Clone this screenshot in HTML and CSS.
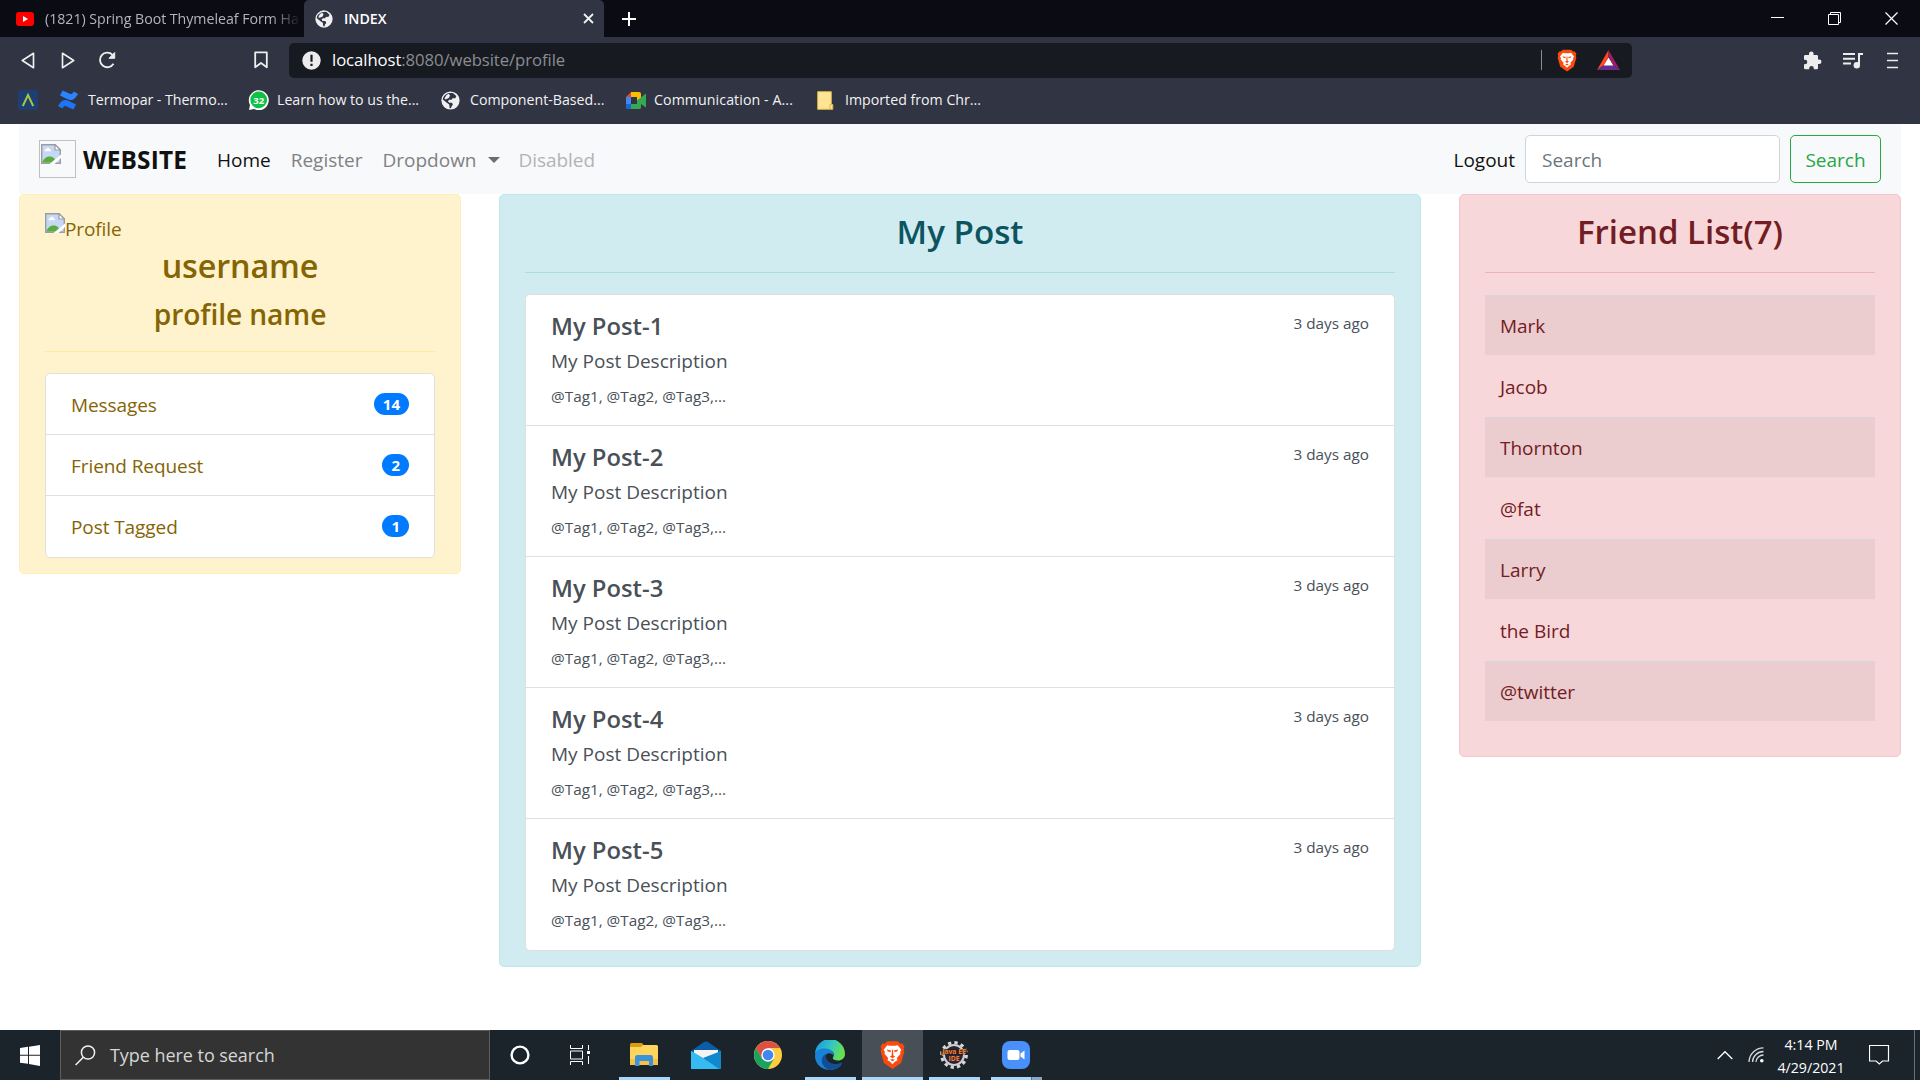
FILE: index.html
```html
<!DOCTYPE html>
<html lang="en">
<head>
<meta charset="utf-8">
<title>INDEX</title>
<link rel="stylesheet" href="styles.css">
</head>
<body>
<svg class="defs" width="0" height="0" aria-hidden="true">
  <symbol id="globe" viewBox="0 0 20 20">
    <circle cx="10" cy="10" r="9.6" fill="#f0f0f2"/>
    <path d="M9 2.2 12.5 2l3.6 3.200-1 2.300-3 .2-1 1.600H8.500l-1.200 1.500 1.200 1.400h3l1 2.300-1.600 2-.4 2L9 17.500l-.3-3.200-2.600-1.900L1.900 9C2.200 5.500 5 3 9 2.200z" fill="#313442"/>
    <path d="M5.500 4.500 8 3l1.500 1.600-1 2.600-3 1.500-2-.4zM8 10.500l3-.3 1 2H9z" fill="#f0f0f2"/>
  </symbol>
  <symbol id="brave" viewBox="0 0 24 28">
    <path d="M7 .8h10l2.500 2.300 2-.2L23.500 6l-.8 2 .7 2.500-3.200 11.200L12 27.500 3.800 21.700.6 10.500 1.300 8 .5 6l2-3.100 2 .2z" fill="#fb4a0e"/>
    <path d="M7 4.600 9.500 5.200h5L17 4.600 20.500 9l-1.200 2.200.4 1.600-3.500 4 .6 2.200-2.300 1.300L12 22.800l-2.500-2.500L7.200 19l.6-2.200-3.500-4 .4-1.600L3.500 9z" fill="#fff"/>
    <path d="M6.500 8.800 10.600 9.600 10 11.300 7.300 10.300zM17.500 8.800 13.400 9.600l.6 1.700 2.700-1zM11.500 9h1l.3 5.500 1.700.9L12 17l-2.500-1.600 1.700-.9zM9.700 18.600 12 17.900l2.300.7L12 20z" fill="#fb4a0e"/>
  </symbol>
  <symbol id="broken" viewBox="0 0 20 20">
    <path d="M.7.7H14L19.300 6V19.300H.7z" fill="#c6d8f5" stroke="#9a9da1" stroke-width="1.400"/>
    <path d="M14 .7V6h5.300z" fill="#fff" stroke="#9a9da1" stroke-width="1.200"/>
    <path d="M3.500 6.800c0-1.500 1.500-1.600 1.700-1.500.3-2 3-1.900 3.300 0 1.500 0 1.800 1.500 1.300 2H4z" fill="#fff"/>
    <path d="M1.400 18.600c1.300-4 4-6.500 8-6 3.500.4 5 3 5.800 6z" fill="#58ad3c"/>
    <path d="M8.500 20 20 10.500V14L13.500 20z" fill="#fff"/>
  </symbol>
</svg>

<header class="browser">
  <div class="tabstrip">
    <div class="tab">
      <svg class="yt" width="18" height="14" viewBox="0 0 18 14"><rect width="18" height="14" rx="3" fill="#f00"/><path d="M7 4v6l5-3z" fill="#fff"/></svg>
      <span class="tab-title faded">(1821) Spring Boot Thymeleaf Form Ha</span>
    </div>
    <div class="tab active">
      <svg width="18" height="18"><use href="#globe"/></svg>
      <span class="tab-title">INDEX</span>
      <svg class="tab-close" width="11" height="11" viewBox="0 0 11 11"><path d="M1 1l9 9M10 1l-9 9" stroke="#f0f0f2" stroke-width="1.800"/></svg>
    </div>
    <svg class="newtab" width="16" height="16" viewBox="0 0 16 16"><path d="M8 1v14M1 8h14" stroke="#fff" stroke-width="2"/></svg>
    <div class="winctl">
      <svg width="14" height="14" viewBox="0 0 14 14"><path d="M0 5.500h13" stroke="#fff"/></svg>
      <svg width="14" height="14" viewBox="0 0 14 14"><path d="M.5 2.500h10v10H.5zM2.500 2.500v-2h10v10h-2" fill="none" stroke="#fff"/></svg>
      <svg width="14" height="14" viewBox="0 0 14 14"><path d="M.5.5l12 12M12.500.5l-12 12" stroke="#fff" stroke-width="1.200"/></svg>
    </div>
  </div>
  <div class="toolbar">
    <svg class="nav-back" width="14" height="17" viewBox="0 0 14 17"><path d="M12.500 1.300v14.400L1.300 8.500z" fill="none" stroke="#eee" stroke-width="1.700" stroke-linejoin="round"/></svg>
    <svg class="nav-fwd" width="14" height="17" viewBox="0 0 14 17"><path d="M1.500 1.300v14.400L12.700 8.500z" fill="none" stroke="#eee" stroke-width="1.700" stroke-linejoin="round"/></svg>
    <svg class="nav-reload" width="19" height="18" viewBox="0 0 19 18"><path d="M15.500 12.800A7.300 7.300 0 1 1 14.500 3.800" fill="none" stroke="#eee" stroke-width="1.900"/><path d="M11 7.300h5.700V1.500z" fill="#eee" stroke="#eee" stroke-width="1" stroke-linejoin="round"/></svg>
    <svg class="nav-mark" width="14" height="18" viewBox="0 0 14 18"><path d="M1.200 1.300h11.600v15L7 12l-5.800 4.300z" fill="none" stroke="#eee" stroke-width="1.800" stroke-linejoin="round"/></svg>
    <div class="urlbar">
      <svg width="19" height="19" viewBox="0 0 19 19"><circle cx="9.500" cy="9.500" r="9.200" fill="#ececee"/><path d="M9.500 3.800v7M9.500 12.800v2.300" stroke="#171a21" stroke-width="2.200"/></svg>
      <span class="url"><b>localhost</b>:8080/website/profile</span>
      <i class="url-sep"></i>
      <svg class="u-brave" width="20" height="23"><use href="#brave"/></svg>
      <svg width="23" height="20" viewBox="0 0 23 20"><path d="M11.500 0v7L7 15l-7 5z" fill="#ff4724"/><path d="M11.500 0 23 20l-7-5-4.500-8z" fill="#9e1f63"/><path d="M0 20l7-5h9l7 5z" fill="#662d91"/><path d="M11.500 7.500 16.300 15.500H6.700z" fill="#fff"/></svg>
    </div>
    <div class="tools">
      <svg width="19" height="19" viewBox="0 0 19 19"><path d="M1 5.200q0-1.200 1.200-1.200H6V2.800a2.300 2.300 0 0 1 4.600 0V4h3.200Q15 4 15 5.200v3.300h1.200a2.300 2.300 0 0 1 0 4.600H15v4q0 1.200-1.200 1.200h-3v-1a2.300 2.300 0 0 0-4.600 0v1h-4Q1 18.300 1 17.100v-3.800h1a2.300 2.300 0 0 0 0-4.600H1z" fill="#ededee"/></svg>
      <svg width="20" height="17" viewBox="0 0 20 17"><path d="M0 2h12M0 6.800h12M0 11.600h8" stroke="#ededee" stroke-width="2"/><path d="M16 13V2h4" fill="none" stroke="#ededee" stroke-width="2"/><circle cx="13.800" cy="13.300" r="3.200" fill="#ededee"/></svg>
      <svg width="12" height="17" viewBox="0 0 12 17"><path d="M0 1.500h11M0 8.500h11M0 15.500h11" stroke="#ededee" stroke-width="1.700"/></svg>
    </div>
  </div>
  <div class="bookmarks">
    <svg width="20" height="20" viewBox="0 0 20 20"><rect width="20" height="20" rx="2" fill="#1f3f72"/><path d="M4.800 16 10 5l5.200 11" fill="none" stroke="#a2c83c" stroke-width="2"/></svg>
    <a class="bm1"><svg width="20" height="20" viewBox="0 0 20 20"><path d="M1 14.500C4 9.500 7 9 11 11l7 3.400-2.600 5.200-6.700-3.200c-2.200-1-2.800-.5-4.500 2.200L0 16z" fill="#1f74f5"/><path d="M19 5.500C16 10.500 13 11 9 9L2 5.600 4.600.4l6.700 3.200c2.200 1 2.800.5 4.500-2.200L20 4z" fill="#2b84ff"/></svg><span>Termopar - Thermo...</span></a>
    <a class="bm2"><svg width="21" height="20" viewBox="0 0 21 20"><path d="M1 20l1-5A10 10 0 1 1 6 19z" fill="#fff"/><circle cx="10.700" cy="9.900" r="8.400" fill="#0dc143"/><text x="10.700" y="13.800" text-anchor="middle" class="wa">32</text></svg><span>Learn how to us the...</span></a>
    <a class="bm3"><svg width="19" height="19"><use href="#globe"/></svg><span>Component-Based...</span></a>
    <a class="bm4"><svg width="20" height="17" viewBox="0 0 20 17"><path d="M0 5 5 0v5z" fill="#ea4335"/><path d="M5 0h8q2 0 2 2v4l-4 3V5H5z" fill="#fbbc04"/><path d="M0 5h5v7H0z" fill="#4285f4"/><path d="M0 12h5v5H1.500Q0 17 0 15.500z" fill="#1967d2"/><path d="M5 12h6V8.500L20 1.500v14L15 12v3.500q0 1.500-1.500 1.500H5z" fill="#34a853"/></svg><span>Communication - A...</span></a>
    <a class="bm5"><svg width="17" height="19" viewBox="0 0 17 19"><path d="M.7.7h13.600v12l1.500 1v4.600H.7z" fill="#ffe494" stroke="#d9b84e"/><path d="M13 18v-4.500h2.500" fill="none" stroke="#d9b84e"/></svg><span>Imported from Chr...</span></a>
  </div>
</header>

<main class="page">
  <nav class="navbar">
    <span class="logo"><svg width="20" height="20"><use href="#broken"/></svg></span>
    <a class="brand">WEBSITE</a>
    <ul class="links">
      <li class="home">Home</li>
      <li class="register">Register</li>
      <li class="dropdown">Dropdown</li>
      <li class="disabled">Disabled</li>
    </ul>
    <a class="logout">Logout</a>
    <input class="search" placeholder="Search">
    <button class="btn">Search</button>
  </nav>

  <div class="columns">
    <section class="card profile">
      <div class="avatar"><svg width="20" height="20"><use href="#broken"/></svg><span>Profile</span></div>
      <h2>username</h2>
      <h3>profile name</h3>
      <hr>
      <ul class="list">
        <li><span>Messages</span><em>14</em></li>
        <li><span>Friend Request</span><em>2</em></li>
        <li><span>Post Tagged</span><em>1</em></li>
      </ul>
    </section>

    <section class="card posts">
      <h2>My Post</h2>
      <hr>
      <div class="list">
        <article><header><h5>My Post-1</h5><small>3 days ago</small></header><p>My Post Description</p><small class="tags">@Tag1, @Tag2, @Tag3,...</small></article>
        <article><header><h5>My Post-2</h5><small>3 days ago</small></header><p>My Post Description</p><small class="tags">@Tag1, @Tag2, @Tag3,...</small></article>
        <article><header><h5>My Post-3</h5><small>3 days ago</small></header><p>My Post Description</p><small class="tags">@Tag1, @Tag2, @Tag3,...</small></article>
        <article><header><h5>My Post-4</h5><small>3 days ago</small></header><p>My Post Description</p><small class="tags">@Tag1, @Tag2, @Tag3,...</small></article>
        <article><header><h5>My Post-5</h5><small>3 days ago</small></header><p>My Post Description</p><small class="tags">@Tag1, @Tag2, @Tag3,...</small></article>
      </div>
    </section>

    <section class="card friends">
      <h2>Friend List(7)</h2>
      <hr>
      <ul class="rows">
        <li>Mark</li><li>Jacob</li><li>Thornton</li><li>@fat</li><li>Larry</li><li>the Bird</li><li>@twitter</li>
      </ul>
    </section>
  </div>
</main>

<footer class="taskbar">
  <div class="start"><svg width="20" height="21" viewBox="0 0 20 21"><path d="M0 3 8 1.800V9.800H0zM9 1.700 20 0v9.800H9zM0 10.800h8v8L0 17.700zM9 10.800h11V21L9 19z" fill="#fff"/></svg></div>
  <div class="tsearch">
    <svg width="21" height="21" viewBox="0 0 21 21"><circle cx="13" cy="7.500" r="6.600" fill="none" stroke="#f2f2f2" stroke-width="1.500"/><path d="M8.300 12.200.6 20" stroke="#f2f2f2" stroke-width="1.500"/></svg>
    <span>Type here to search</span>
  </div>
  <div class="tb plain"><svg width="20" height="20" viewBox="0 0 20 20"><circle cx="10" cy="10" r="8.400" fill="none" stroke="#fff" stroke-width="2.400"/></svg></div>
  <div class="tb plain"><svg width="20" height="20" viewBox="0 0 20 20"><path d="M.5 0v3.500h12V0M.5 20v-3.500h12V20M.5 6h12v8H.5zM18.500 0v5M18.500 11v8" fill="none" stroke="#fff"/><path d="M17 6h3v3h-3z" fill="#fff"/></svg></div>
  <div class="apps">
    <div class="tb run"><svg width="28" height="24" viewBox="0 0 28 24"><path d="M0 1.500Q0 0 1.500 0H12l1.500 2v4H0z" fill="#e09b0c"/><path d="M0 4h11l2-2h13.500Q28 2 28 3.500V22H0z" fill="#ffd55e"/><path d="M0 16h28v5q0 1-1 1H1q-1 0-1-1z" fill="#f7c244"/><path d="M5 23v-8.500Q5 12 7.500 12h13q2.500 0 2.500 2.500V23h-4v-5H9.500v5z" fill="#3b92d8"/></svg></div>
    <div class="tb"><svg width="30" height="28" viewBox="0 0 30 28"><path d="M0 10 13 .9Q15 0 17 .9L30 10v4H0z" fill="#0a5ea8"/><path d="M3 9h24v9H3z" fill="#f3f3f3"/><path d="M0 10l15 9 15-9v18H0z" fill="#2bb0ec"/><path d="M30 10v18H28L12 17z" fill="#1187cc"/><path d="M0 10v18h28L12 17z" fill="#35bbf2"/></svg></div>
    <div class="tb"><svg width="28" height="28" viewBox="0 0 28 28"><circle cx="14" cy="14" r="14" fill="#ffcd40"/><path d="M1.900 7A14 14 0 0 1 26.100 7H14L8 17.500z" fill="#dd5144"/><path d="M1.900 7A14 14 0 0 0 14 28l6-10.500H8z" fill="#1aa260"/><circle cx="14" cy="14" r="6.700" fill="#fff"/><circle cx="14" cy="14" r="5.300" fill="#4285f4"/></svg></div>
    <div class="tb run"><svg width="30" height="30" viewBox="0 0 30 30">
      <defs><linearGradient id="eg" x1="0" y1="0" x2="1" y2=".3"><stop offset=".1" stop-color="#1b9be0"/><stop offset=".6" stop-color="#35c8c0"/><stop offset="1" stop-color="#66e04e"/></linearGradient></defs>
      <path d="M0 14A15 15 0 0 1 30 14c0 4-3 6.500-7 6.500-4 0-6-1.500-5-3 2-3 .5-7-5-8C7 8.500 2 10 0 14z" fill="url(#eg)"/>
      <path d="M0 16C0 10 5 8 11 8.500c5 .5 8 4 7.500 7-2-3-6.500-3-8 0-2 5 3 10.500 10 10.500 3 0 4.500-.8 6-1.500C23.500 28.500 19 30 15 30 6 30 0 23.500 0 16z" fill="#1a82d6"/>
      <path d="M10.500 14c-5 3-6 11 3 15.900 6 .6 11-2.400 13.500-6.400.5-.8-.3-1.200-1-.8-7 3.300-15.500.3-15.500-8.700z" fill="#134e94"/></svg></div>
    <div class="tb run hot"><svg width="25" height="30"><use href="#brave"/></svg></div>
    <div class="tb run"><svg width="30" height="28" viewBox="0 0 30 28"><circle cx="15" cy="14" r="12.300" fill="none" stroke="#d6d6d6" stroke-width="3.200" stroke-dasharray="3.300 3.140"/><circle cx="15" cy="14" r="10" fill="#2a2340" stroke="#cfcfcf" stroke-width="2"/><path d="M2 8h26v5.500H2z" fill="#241c1c" opacity=".75"/><text x="15" y="13" class="ide" text-anchor="middle">Java EE</text><text x="15" y="19.500" class="ide" text-anchor="middle">IDE</text></svg></div>
    <div class="tb run multi"><svg width="28" height="28" viewBox="0 0 28 28"><rect width="28" height="28" rx="8" fill="#4a90fb"/><rect x="5.500" y="9" width="12" height="10" rx="2" fill="#fff"/><path d="M18.500 12.500 22.500 9.500v9l-4-3z" fill="#fff"/></svg></div>
  </div>
  <div class="tray">
    <svg class="chev" width="16" height="10" viewBox="0 0 16 10"><path d="M.7 9 8 1.700 15.300 9" fill="none" stroke="#fff" stroke-width="1.400"/></svg>
    <svg class="wifi" width="16" height="16" viewBox="0 0 16 16"><g fill="none" stroke="#d8dadc" stroke-width="1.300"><path d="M1 15A14.500 14.500 0 0 1 15.500.8"/><path d="M4.500 15A11 11 0 0 1 15.500 4.500"/><path d="M8 15A7.500 7.500 0 0 1 15.500 8"/></g><circle cx="13.800" cy="13.800" r="1.800" fill="#fff"/></svg>
    <div class="clock"><span>4:14 PM</span><span>4/29/2021</span></div>
    <svg class="note" width="21" height="21" viewBox="0 0 21 21"><path d="M.5.5h19v15.500h-6l-3.200 3-3.200-3H.5z" fill="none" stroke="#fff" stroke-width="1.200"/></svg>
    <i class="peek"></i>
  </div>
</footer>
</body>
</html>
```
FILE: styles.css
```css
* { box-sizing: border-box; }
body {
  margin: 0;
  width: 1920px;
  height: 1080px;
  display: flex;
  flex-direction: column;
  overflow: hidden;
  background: #fff;
  font-family: "Open Sans", "Noto Sans", sans-serif;
  font-size: 19px;
  line-height: 30px;
}
.defs { position: absolute; }
svg { display: block; flex: none; }
ul { list-style: none; margin: 0; padding: 0; }
h2, h3, h5, p { margin: 0; white-space: nowrap; }
span, a, li, small { white-space: nowrap; }

/* Browser chrome */
.browser { height: 124px; background: #313442; color: #f2f2f4; font-size: 14.2px; }
.tabstrip { height: 37px; background: #0b0b14; display: flex; align-items: center; }
.tab { display: flex; align-items: center; height: 37px; padding-left: 16px; width: 304px; color: #b4b4ba; }
.tab .yt { margin-right: 11px; }
.tab-title.faded { width: 256px; overflow: hidden; letter-spacing: -.03px; -webkit-mask-image: linear-gradient(90deg, #000 225px, transparent 256px); mask-image: linear-gradient(90deg, #000 225px, transparent 256px); }
.tab.active { width: 300px; padding: 0 10px 0 11px; background: #313442; border-radius: 5px 5px 0 0; color: #fff; font-weight: 600; gap: 11px; }
.tab-close { margin-left: auto; }
.newtab { margin-left: 17px; }
.winctl { display: flex; gap: 43px; margin-left: auto; margin-right: 21px; }
.toolbar { height: 46px; display: flex; align-items: center; padding-left: 21px; }
.nav-fwd { margin-left: 26px; }
.nav-reload { margin-left: 23px; }
.nav-mark { margin-left: 137px; }
.urlbar { width: 1343px; height: 35px; margin-left: 21px; padding: 0 12px 0 13px; background: #171a21; border-radius: 5px; display: flex; align-items: center; }
.url { margin-left: 11px; font-size: 16.700px; letter-spacing: -.07px; color: #8b8d92; }
.url b { font-weight: 400; color: #fff; }
.url-sep { width: 1px; height: 20px; margin-left: auto; background: #8a8c90; }
.u-brave { margin: 0 20px 0 15px; }
.tools { display: flex; align-items: center; gap: 21px; margin-left: auto; padding-right: 21px; }
.tools svg:last-child { margin-left: 3px; }
.bookmarks { display: flex; align-items: center; height: 34px; padding-left: 18px; }
.bookmarks a { display: flex; align-items: center; gap: 10px; }
.bm1 { width: 190px; margin-left: 20px; letter-spacing: -.05px; }
.bm2 { width: 193px; letter-spacing: -.03px; }
.bookmarks .bm2 { gap: 8px; }
.bm3 { width: 185px; }
.bm4 { width: 191px; }
.bookmarks .bm4 { gap: 8px; letter-spacing: .08px; }
.bookmarks .bm5 { gap: 11px; }
.wa { font-size: 9.500px; font-weight: 700; fill: #fff; }

/* Page */
.page { flex: 1; padding: 0 19px; }
.navbar { height: 70px; padding: 0 20px; background: #f8f9fa; display: flex; align-items: center; }
.logo { width: 37px; height: 38px; border: 1px solid #c0c0c0; padding: 3px 1px; }
.brand { margin-left: 7px; padding-top: 1px; width: 105px; font-size: 24.400px; font-weight: 700; letter-spacing: .15px; color: #111; }
.links { display: flex; gap: 20px; margin-left: 29px; padding-top: 2px; color: #808182; }
.home { color: #111; }
.dropdown { width: 116px; display: flex; align-items: center; gap: 11px; }
.dropdown::after { content: ""; border: 6px solid transparent; border-top-color: #6c6d6e; border-bottom: 0; }
.disabled { letter-spacing: -.05px; color: #b3b4b5; }
.logout { margin-left: auto; padding-top: 2px; color: #111; }
.search { width: 255px; height: 48px; margin: 0 10px; padding: 2px 16px 0; border: 1px solid #ced4da; border-radius: 5px; font: inherit; background: #fff; }
.search::placeholder { color: #6c757d; opacity: 1; }
.btn { width: 91px; height: 48px; padding: 2px 0 0; border: 1px solid #28a745; border-radius: 5px; background: transparent; color: #28a745; font: inherit; }

.columns { display: grid; grid-template-columns: 442px 922px 442px; gap: 38px; align-items: start; }
.card { padding: 15px 25px; border: 1px solid; border-radius: 5px; }
.card h2 { height: 42px; line-height: 44px; font-size: 33px; font-weight: 600; text-align: center; }
.card h3 { height: 36px; margin-top: 10px; line-height: 38px; font-size: 28.200px; font-weight: 600; letter-spacing: -.1px; text-align: center; }
.card hr { height: 1px; margin: 20px 0 21px; border: 0; }
.list { border: 1px solid #dfdfdf; border-radius: 5px; background: #fff; }
.profile { background: #fff3cd; border-color: #ffeeba; color: #856404; }
.profile h2 { font-size: 32.300px; letter-spacing: -.1px; }
.profile hr { background: #ffe8a1; }
.avatar { display: flex; height: 33px; padding-top: 3px; }
.avatar span { padding-top: 1px; letter-spacing: -.1px; }
.profile .list li { display: flex; justify-content: space-between; height: 61px; padding: 16px 25px 0; border-bottom: 1px solid #dfdfdf; letter-spacing: -.08px; }
.profile .list li:last-child { border: 0; }
.profile em { height: 22px; margin-top: 3px; padding: 0 9px; border-radius: 11px; background: #007bff; color: #fff; font-size: 15px; font-weight: 700; font-style: normal; letter-spacing: 0; line-height: 22px; }
.posts { background: #d1ecf1; border-color: #bee5eb; color: #0c5460; }
.posts h2 { font-size: 33.200px; }
.posts hr { background: #abdde5; }
.posts article { height: 131px; padding: 16px 25px 0; border-bottom: 1px solid #dfdfdf; color: #495057; }
.posts article:last-child { border: 0; }
.posts article header { display: flex; justify-content: space-between; height: 30px; }
.posts h5 { font-size: 23.800px; font-weight: 600; line-height: 30px; }
.posts p { height: 30px; margin: 5px 0; }
.posts small { display: block; font-size: 15.300px; line-height: 24px; }
.posts .tags { line-height: 31px; }
.friends { background: #f8d7da; border-color: #f5c6cb; color: #721c24; }
.friends hr { background: #f1b0b7; }
.rows { padding-bottom: 20px; }
.rows li { height: 61px; padding: 16px 15px 0; border-top: 1px solid #f3d6da; letter-spacing: -.03px; }
.rows li:nth-child(odd) { background: #ebcccf; border-color: #dee2e6; }

/* Taskbar */
.taskbar { height: 50px; display: flex; background: #1b232b; color: #fff; }
.start { width: 60px; display: grid; place-items: center; }
.tsearch { width: 430px; height: 50px; padding-left: 14px; border: 1px solid #5d5d5d; background: #333; display: flex; align-items: center; gap: 14px; color: #d6d6d6; font-size: 18px; letter-spacing: -.05px; }
.tb { width: 62px; height: 50px; display: flex; align-items: center; justify-content: center; }
.plain { width: 60px; }
.apps { display: flex; margin-left: 3px; }
.run { background: linear-gradient(#a9d6fb, #a9d6fb) 6px 47px / 51px 3px no-repeat; }
.hot { width: 61px; margin-left: 1px; background: linear-gradient(#a9d6fb, #a9d6fb) 0 47px / 61px 3px no-repeat #494f57; }
.multi { background: linear-gradient(90deg, #a9d6fb 40px, #5d7387 40px, #5d7387 41px, #86a8c5 41px) 6px 47px / 51px 3px no-repeat; }
.ide { font-size: 6.800px; font-weight: 700; fill: #f58220; }
.tray { display: flex; align-items: center; margin-left: auto; }
.wifi { margin-left: 15px; }
.clock { width: 80px; margin: 0 17px 0 7px; padding-top: 1px; display: flex; flex-direction: column; align-items: center; font-size: 14.200px; line-height: 23px; }
.note { margin-left: 1px; }
.peek { width: 1px; height: 50px; margin: 0 5px 0 24px; background: #6a7076; }
```
